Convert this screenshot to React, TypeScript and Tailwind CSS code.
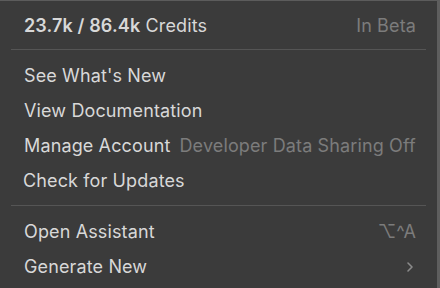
import React from "react";

function Row({ children, right, className = "" }: { children: React.ReactNode; right?: React.ReactNode; className?: string }) {
  return (
    <div className={`flex h-[35px] items-center justify-between whitespace-nowrap pl-[24px] pr-[21px] ${className}`}>
      <div className="flex shrink-0 items-center">{children}</div>
      {right}
    </div>
  );
}

export default function App() {
  return (
    <div
      className="flex h-[288px] w-[440px] flex-col overflow-hidden border-t border-r-[3px] border-t-[#5c5c5c] border-r-[#5e5e5e] bg-[#3b3b3b] text-[18px] tracking-[0.13px] text-[#d8d8d8]"
      style={{ fontFamily: "Inter, 'Noto Sans', sans-serif" }}
    >
      <div className="flex h-[48px] items-center justify-between whitespace-nowrap pl-[24px] pr-[21px] pt-[1px]">
        <div>
          <span className="font-semibold">23.7k / 86.4k</span> <span>Credits</span>
        </div>
        <span className="text-[#7c7c7c]">In Beta</span>
      </div>
      <div className="mx-[11px] h-px bg-[#555555]" />
      <div className="pb-[7px] pt-[8px]">
        <Row>See What's New</Row>
        <Row>View Documentation</Row>
        <Row>
          <span>Manage Account</span>
          <span className="ml-[9px] text-[#7c7c7c]">Developer Data Sharing Off</span>
        </Row>
        <Row className="!pl-[23px]">Check for Updates</Row>
      </div>
      <div className="mx-[11px] h-px bg-[#555555]" />
      <div className="pt-[8px]">
        <Row right={<span className="text-[#7c7c7c]">⌥^A</span>}>Open Assistant</Row>
        <Row
          right={
            <svg width="10" height="12" viewBox="0 0 10 12" className="mr-[1px]">
              <path d="M3 2l4 4-4 4" fill="none" stroke="#8a8a8a" strokeWidth="1.6" strokeLinecap="round" strokeLinejoin="round" />
            </svg>
          }
        >
          Generate New
        </Row>
      </div>
    </div>
  );
}
